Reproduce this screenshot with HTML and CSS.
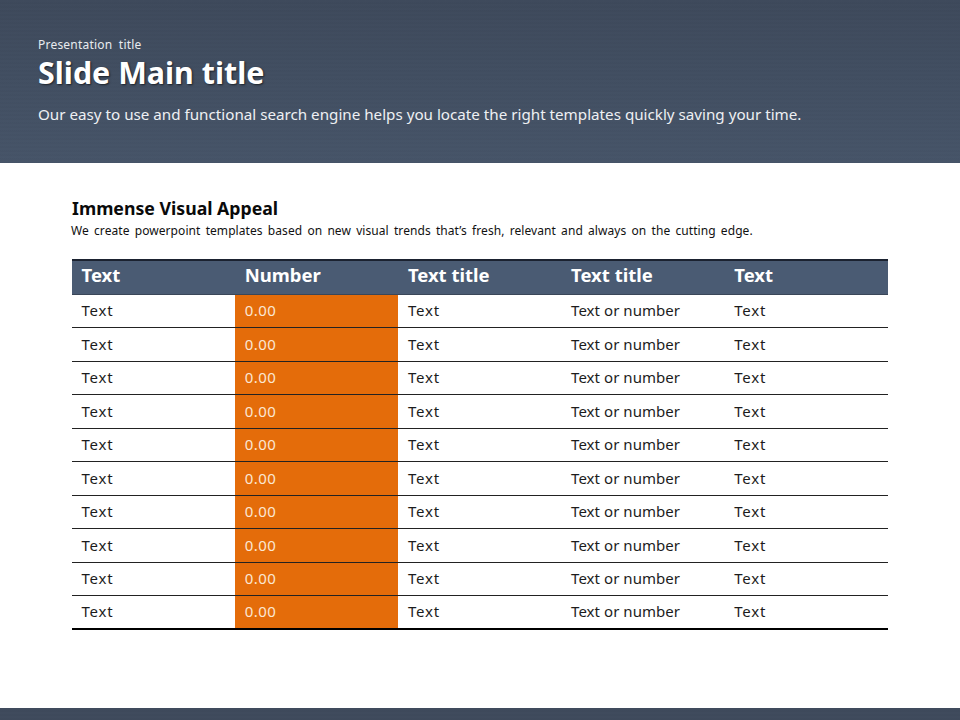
FILE: index.html
```html
<!DOCTYPE html>
<html lang="en">
<head>
<meta charset="utf-8">
<title>Slide Main title</title>
<link rel="stylesheet" href="styles.css">
</head>
<body>
<div class="slide">
  <header class="banner">
    <p class="eyebrow">Presentation title</p>
    <h1 class="main-title">Slide Main title</h1>
    <p class="lead">Our easy to use and functional search engine helps you locate the right templates quickly saving your time.</p>
  </header>
  <main class="content">
    <h2 class="section-title">Immense Visual Appeal</h2>
    <p class="section-text">We create powerpoint templates based on new visual trends that’s fresh, relevant and always on the cutting edge.</p>
    <table class="data">
      <thead>
        <tr><th>Text</th><th>Number</th><th>Text title</th><th>Text title</th><th>Text</th></tr>
      </thead>
      <tbody>
        <tr><td>Text</td><td class="num">0.00</td><td>Text</td><td class="long">Text or number</td><td>Text</td></tr>
        <tr><td>Text</td><td class="num">0.00</td><td>Text</td><td class="long">Text or number</td><td>Text</td></tr>
        <tr><td>Text</td><td class="num">0.00</td><td>Text</td><td class="long">Text or number</td><td>Text</td></tr>
        <tr><td>Text</td><td class="num">0.00</td><td>Text</td><td class="long">Text or number</td><td>Text</td></tr>
        <tr><td>Text</td><td class="num">0.00</td><td>Text</td><td class="long">Text or number</td><td>Text</td></tr>
        <tr><td>Text</td><td class="num">0.00</td><td>Text</td><td class="long">Text or number</td><td>Text</td></tr>
        <tr><td>Text</td><td class="num">0.00</td><td>Text</td><td class="long">Text or number</td><td>Text</td></tr>
        <tr><td>Text</td><td class="num">0.00</td><td>Text</td><td class="long">Text or number</td><td>Text</td></tr>
        <tr><td>Text</td><td class="num">0.00</td><td>Text</td><td class="long">Text or number</td><td>Text</td></tr>
        <tr><td>Text</td><td class="num">0.00</td><td>Text</td><td class="long">Text or number</td><td>Text</td></tr>
      </tbody>
    </table>
  </main>
  <footer class="footer-bar"></footer>
</div>
</body>
</html>
```
FILE: styles.css
```css
* { box-sizing: border-box; }
html, body { margin: 0; padding: 0; }
body { background: #fff; font-family: "Noto Sans", "DejaVu Sans", sans-serif; color: #111; }
.slide { width: 960px; height: 720px; display: flex; flex-direction: column; overflow: hidden; }
.banner {
  height: 163px;
  padding: 36px 38px 0;
  color: #fff;
  background:
    repeating-linear-gradient(180deg, rgba(255,255,255,.008) 0 2px, rgba(0,0,0,.008) 2px 4px),
    linear-gradient(180deg, #3d495b 0%, #465468 100%);
}
.eyebrow { margin: 0; font-size: 12px; line-height: 17px; color: #e8ebef; letter-spacing: .22px; word-spacing: 3px; }
.main-title { margin: 0; font-size: 30.4px; line-height: 40px; font-weight: 700; text-shadow: 1px 1px 2px rgba(0,0,0,.6); }
.lead { margin: 10px 0 0; font-size: 15.2px; line-height: 22px; color: #eef0f3; white-space: nowrap; }
.content { flex: 1; padding: 34px 72px 0; }
.section-title { margin: 0; font-size: 17.7px; line-height: 23px; font-weight: 700; color: #0a0a0a; }
.section-text { margin: 2px 0 0 -1px; font-size: 12px; line-height: 17px; color: #111; letter-spacing: .07px; word-spacing: 2px; white-space: nowrap; }
.data { margin-top: 19.5px; width: 816px; border-collapse: separate; border-spacing: 0; table-layout: fixed; }
.data th {
  height: 36px;
  padding: 0 0 5px 9.5px;
  text-align: left;
  font-size: 18.5px;
  font-weight: 700;
  color: #fff;
  background: #4a5b73;
  border-top: 2px solid #1b2230;
  border-bottom: 1px solid #3a4658;
}
.data td {
  height: 33.5px;
  padding: 0 0 1px 9.5px;
  font-size: 15px;
  letter-spacing: .8px;
  color: #1c1c1c;
  border-bottom: 1px solid #222;
}
.data tbody tr:last-child td { border-bottom: 2px solid #000; }
.data td.long { letter-spacing: .05px; }
.data td.num { background: #e46c0a; color: #fbe7d4; letter-spacing: .5px; }
.footer-bar {
  height: 12px;
  background:
    repeating-linear-gradient(180deg, rgba(255,255,255,.008) 0 2px, rgba(0,0,0,.008) 2px 4px),
    #3e4a5c;
}
```
